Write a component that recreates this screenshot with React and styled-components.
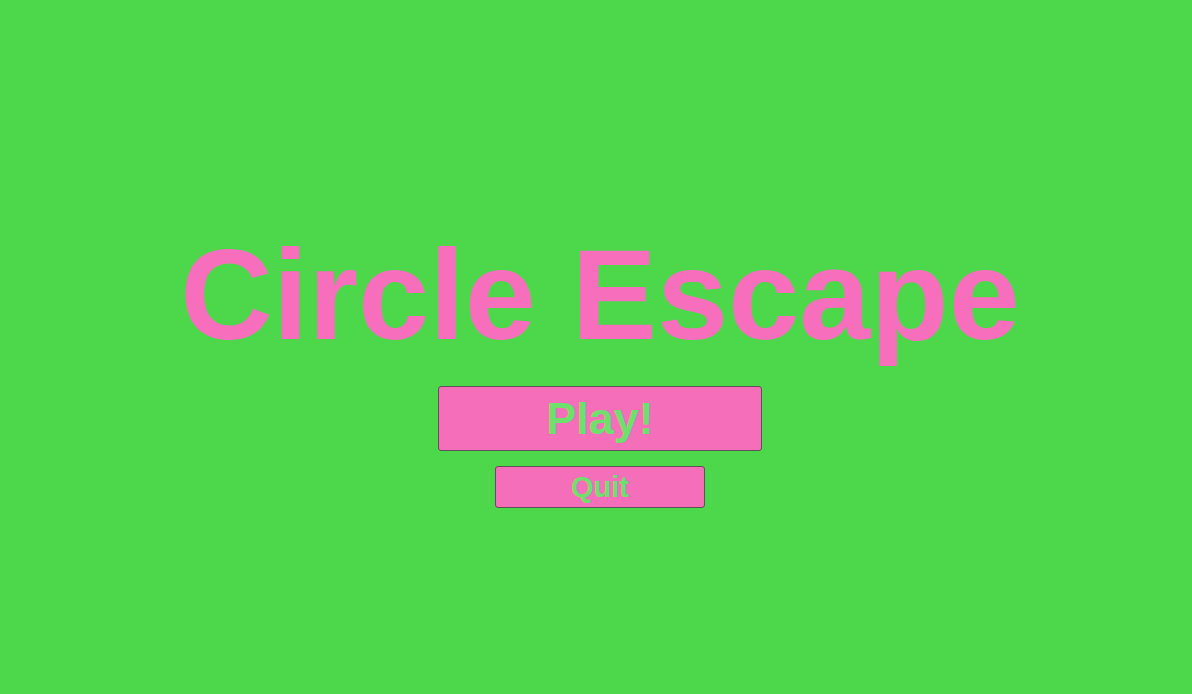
import styled, { createGlobalStyle } from "styled-components";

const GlobalStyle = createGlobalStyle`
  html, body {
    margin: 0;
    padding: 0;
    background: #4cd84a;
  }
  body {
    font-family: "Liberation Sans", Arial, sans-serif;
  }
`;

const Screen = styled.div`
  width: 100%;
  height: 100vh;
  box-sizing: border-box;
  padding: 231px 0 0 8px;
  display: flex;
  flex-direction: column;
  align-items: center;
  background: #4cd84a;
`;

const Title = styled.h1`
  margin: 0;
  font-size: 128px;
  line-height: 1;
  font-weight: bold;
  color: #f76ebd;
  white-space: nowrap;
`;

const MenuButton = styled.button`
  display: flex;
  align-items: center;
  justify-content: center;
  box-sizing: border-box;
  width: ${(p) => p.$w}px;
  height: ${(p) => p.$h}px;
  margin-top: ${(p) => p.$top}px;
  padding: 0;
  border: 1px solid #5e5158;
  border-radius: 3px;
  background: #f56eb9;
  color: #6fe06c;
  font-family: "Liberation Sans", Arial, sans-serif;
  font-weight: bold;
  font-size: ${(p) => p.$size}px;
  line-height: 1;
  cursor: pointer;
`;

export default function App() {
  return (
    <>
      <GlobalStyle />
      <Screen>
        <Title>Circle Escape</Title>
        <MenuButton $w={324} $h={65} $top={27} $size={45}>
          Play!
        </MenuButton>
        <MenuButton $w={210} $h={42} $top={15} $size={29}>
          Quit
        </MenuButton>
      </Screen>
    </>
  );
}
